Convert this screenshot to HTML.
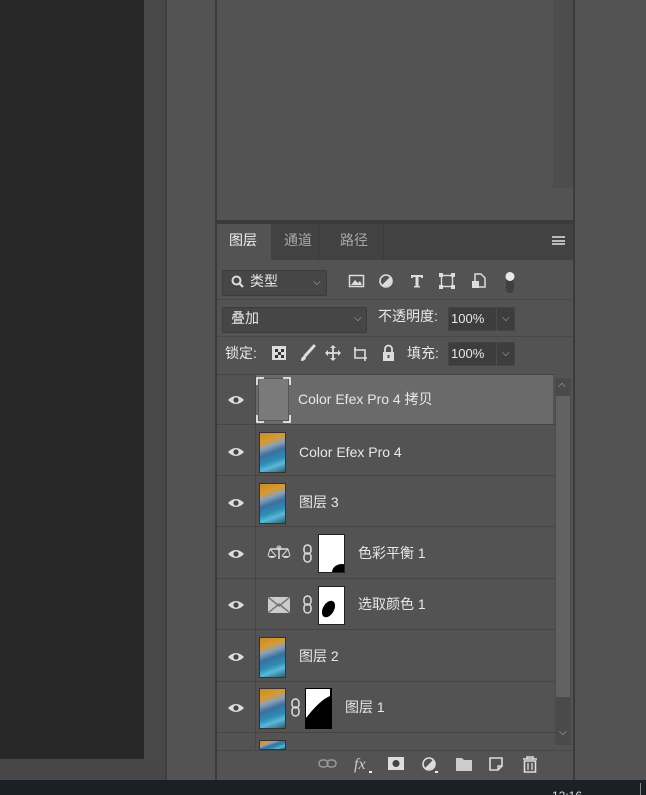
<!DOCTYPE html>
<html style="width:646px;height:795px;overflow:hidden"><head><meta charset="utf-8"><style>
*{margin:0;padding:0;box-sizing:border-box}
body{width:646px;height:795px;overflow:hidden;background:#535353;position:relative;font-family:"Liberation Sans","Noto Sans CJK SC",sans-serif;color:#e8e8e8}
.a{position:absolute}
.t{font-size:14px;white-space:nowrap;line-height:17px}
.eye{position:absolute;left:228px;width:16px;height:10px}
.row{position:absolute;left:217px;width:338px;border-bottom:1px solid #454545}
.th{position:absolute;left:259px;width:27px;height:41px;border:1px solid #333;background:linear-gradient(160deg,#c98a2a 0%,#d89a30 22%,#8aa0b8 35%,#3b6fa0 50%,#2d8fb5 68%,#5bb8d8 80%,#2a5b6c 100%)}
.chev{position:absolute;font-size:10px;color:#bbb}
</style></head><body>
<div class="a" style="left:0;top:0;width:144px;height:759px;background:#282828"></div>
<div class="a" style="left:144px;top:0;width:21px;height:759px;background:#484848"></div>
<div class="a" style="left:0;top:759px;width:165px;height:21px;background:#474747"></div>
<div class="a" style="left:165px;top:0;width:2px;height:780px;background:#3e3e3e"></div>
<div class="a" style="left:215px;top:0;width:2px;height:780px;background:#3a3a3a"></div>
<div class="a" style="left:573px;top:0;width:2px;height:780px;background:#3a3a3a"></div>
<div class="a" style="left:553px;top:0;width:20px;height:188px;background:#4d4d4d"></div>
<div class="a" style="left:217px;top:220px;width:356px;height:4px;background:#3a3a3a"></div>
<div class="a" style="left:0;top:780px;width:646px;height:15px;background:#1b2026;overflow:hidden"><div class="t" style="position:absolute;left:552px;top:8px;font-size:12px;color:#ddd">12:16</div><div style="position:absolute;left:640px;top:3px;width:1px;height:12px;background:#888"></div></div>
<!-- tab header -->
<div class="a" style="left:217px;top:224px;width:356px;height:36px;background:#424242"></div>
<div class="a" style="left:217px;top:224px;width:54px;height:37px;background:#535353"></div>
<div class="a" style="left:318px;top:224px;width:1px;height:36px;background:#3a3a3a"></div>
<div class="a" style="left:383px;top:224px;width:1px;height:36px;background:#3a3a3a"></div>
<div class="a t" style="left:229px;top:232px;color:#f0f0f0">图层</div>
<div class="a t" style="left:284px;top:232px;color:#a8a8a8">通道</div>
<div class="a t" style="left:340px;top:232px;color:#a8a8a8">路径</div>
<div class="a" style="left:552px;top:236px;width:13px;height:9px;border-top:2px solid #bbb;border-bottom:2px solid #bbb"><div style="margin-top:1.5px;height:2px;background:#bbb"></div></div>
<!-- filter row -->
<div class="a" style="left:222px;top:270px;width:105px;height:26px;background:#464646;border:1px solid #3c3c3c;border-radius:2px"></div>
<svg class="a" style="left:231px;top:275px" width="14" height="14"><circle cx="5.5" cy="5.5" r="4" stroke="#ddd" stroke-width="2" fill="none"/><line x1="8.5" y1="8.5" x2="12" y2="12" stroke="#ddd" stroke-width="2.2"/></svg>
<div class="a t" style="left:250px;top:273px">类型</div>
<div class="chev" style="left:313px;top:277px">⌵</div>
<svg class="a" style="left:348px;top:272px" width="170" height="22">
<rect x="1.5" y="3.5" width="14" height="11" fill="none" stroke="#ddd" stroke-width="1.5"/><path d="M3 13 L7 8 L10 11 L12 9 L14 13Z" fill="#ddd"/>
<circle cx="38" cy="9" r="6" fill="none" stroke="#ddd" stroke-width="1.6"/><path d="M42.2 4.8 A6 6 0 0 1 33.8 13.2Z" fill="#ddd"/>
<path d="M63 3 H75 V6 H73 V5 H70.5 V14 H72 V15.5 H66 V14 H67.5 V5 H65 V6 H63Z" fill="#ddd"/>
<rect x="93.5" y="3.5" width="11" height="11" fill="none" stroke="#ddd" stroke-width="1.4"/><rect x="91" y="1" width="4" height="4" fill="#ddd"/><rect x="103" y="1" width="4" height="4" fill="#ddd"/><rect x="91" y="13" width="4" height="4" fill="#ddd"/><rect x="103" y="13" width="4" height="4" fill="#ddd"/>
<path d="M127 2 H133 L137 6 V15 H127Z" fill="none" stroke="#ddd" stroke-width="1.5"/><rect x="124" y="9" width="7" height="7" fill="#ddd"/>
<rect x="158" y="6" width="8" height="15" rx="4" fill="#3f3f3f"/><circle cx="162" cy="4.5" r="4.5" fill="#e8e8e8"/>
</svg>
<div class="a" style="left:217px;top:299px;width:356px;height:1px;background:#484848"></div>
<!-- blend row -->
<div class="a" style="left:222px;top:307px;width:145px;height:26px;background:#464646;border:1px solid #3c3c3c;border-radius:2px"></div>
<div class="a t" style="left:231px;top:310px">叠加</div>
<div class="chev" style="left:354px;top:313px">⌵</div>
<div class="a t" style="left:378px;top:308px">不透明度:</div>
<div class="a" style="left:448px;top:307px;width:67px;height:24px;background:#3d3d3d;border:1px solid #454545"></div>
<div class="a" style="left:496px;top:307px;width:1px;height:24px;background:#4c4c4c"></div>
<div class="a t" style="left:451px;top:310px;font-size:13px">100%</div>
<div class="chev" style="left:502px;top:313px">⌵</div>
<div class="a" style="left:217px;top:336px;width:356px;height:1px;background:#484848"></div>
<!-- lock row -->
<div class="a t" style="left:225px;top:345px">锁定:</div>
<svg class="a" style="left:270px;top:344px" width="130" height="18">
<rect x="2" y="2" width="14" height="14" fill="#ddd"/><rect x="5" y="5" width="3" height="3" fill="#333"/><rect x="11" y="5" width="3" height="3" fill="#333"/><rect x="8" y="8" width="3" height="3" fill="#333"/><rect x="5" y="11" width="3" height="3" fill="#333"/><rect x="11" y="11" width="3" height="3" fill="#333"/>
<path d="M44 2 L35 12" stroke="#ddd" stroke-width="3" stroke-linecap="round"/><path d="M31 17 Q31 12 35 12 L36 14 Q35 17 31 17Z" fill="#ddd"/>
<path d="M63 2 V16 M56 9 H70" stroke="#ddd" stroke-width="1.8"/><path d="M63 1 L60 4 H66Z M63 17 L60 14 H66Z M55 9 L58 6 V12Z M71 9 L68 6 V12Z" fill="#ddd"/>
<path d="M85 3 V14 H97 M84 6 H95 V17" stroke="#ddd" stroke-width="1.6" fill="none"/>
<rect x="113" y="8" width="11" height="9" fill="#ddd"/><path d="M115 8 V5 A3.5 3.5 0 0 1 122 5 V8" stroke="#ddd" stroke-width="1.8" fill="none"/><rect x="117.5" y="11" width="2" height="3" fill="#555"/>
</svg>
<div class="a t" style="left:407px;top:345px">填充:</div>
<div class="a" style="left:448px;top:342px;width:67px;height:24px;background:#3d3d3d;border:1px solid #454545"></div>
<div class="a" style="left:496px;top:342px;width:1px;height:24px;background:#4c4c4c"></div>
<div class="a t" style="left:451px;top:345px;font-size:13px">100%</div>
<div class="chev" style="left:502px;top:348px">⌵</div>
<!-- layers -->
<div class="a" style="left:217px;top:374px;width:338px;height:1px;background:#454545"></div>
<div class="a" style="left:255px;top:375px;width:298px;height:49px;background:#6a6a6a"></div>
<div class="a" style="left:255px;top:375px;width:1px;height:375px;background:#474747"></div>
<div class="row" style="top:375px;height:50px"></div>
<div class="row" style="top:425px;height:51px"></div>
<div class="row" style="top:476px;height:51px"></div>
<div class="row" style="top:527px;height:52px"></div>
<div class="row" style="top:579px;height:51px"></div>
<div class="row" style="top:630px;height:52px"></div>
<div class="row" style="top:682px;height:51px"></div>
<svg width="0" height="0" style="position:absolute"><defs><g id="e"><path d="M0 5 Q8 -3 16 5 Q8 13 0 5Z" fill="#ddd"/><circle cx="8" cy="5" r="2.6" fill="#444"/></g></defs></svg>
<svg class="eye" style="top:395px"><use href="#e"/></svg>
<svg class="eye" style="top:447px"><use href="#e"/></svg>
<svg class="eye" style="top:498px"><use href="#e"/></svg>
<svg class="eye" style="top:549px"><use href="#e"/></svg>
<svg class="eye" style="top:600px"><use href="#e"/></svg>
<svg class="eye" style="top:652px"><use href="#e"/></svg>
<svg class="eye" style="top:703px"><use href="#e"/></svg>
<div class="a" style="left:258px;top:378px;width:31px;height:43px;background:#7a7a7a;border:1px solid #555"></div>
<svg class="a" style="left:256px;top:377px" width="35" height="46"><path d="M1 8 V1 H8 M27 1 H34 V8 M1 38 V45 H8 M27 45 H34 V38" stroke="#fff" stroke-width="1.5" fill="none"/></svg>
<div class="a t" style="left:298px;top:391px">Color Efex Pro 4 拷贝</div>
<div class="th" style="top:432px"></div>
<div class="a t" style="left:299px;top:444px">Color Efex Pro 4</div>
<div class="th" style="top:483px"></div>
<div class="a t" style="left:299px;top:494px">图层 3</div>
<svg class="a" style="left:267px;top:545px" width="24" height="18"><path d="M12 2 V14 M3 4 H21" stroke="#ddd" stroke-width="1.5"/><circle cx="12" cy="3" r="2" fill="none" stroke="#ddd"/><path d="M1 11 A5 5 0 0 0 9 11Z M15 11 A5 5 0 0 0 23 11Z" fill="#ddd"/><path d="M3 4 L1 11 M3 4 L9 11 M21 4 L15 11 M21 4 L23 11" stroke="#ddd"/></svg>
<svg class="a" style="left:302px;top:544px" width="12" height="20"><rect x="2" y="1" width="7" height="9" rx="3.5" fill="none" stroke="#ddd" stroke-width="1.5"/><rect x="2" y="9" width="7" height="9" rx="3.5" fill="none" stroke="#ddd" stroke-width="1.5"/></svg>
<div class="a" style="left:318px;top:534px;width:27px;height:39px;background:#fff;border:1px solid #222;overflow:hidden"><div style="position:absolute;right:-8px;bottom:-8px;width:20px;height:16px;border-radius:50%;background:#000"></div></div>
<div class="a t" style="left:358px;top:545px">色彩平衡 1</div>
<svg class="a" style="left:268px;top:597px" width="22" height="16"><rect width="22" height="16" fill="#ccc"/><path d="M0 0 L11 9 L22 0 M0 16 L11 7 L22 16" stroke="#777" stroke-width="1.5" fill="none"/></svg>
<svg class="a" style="left:302px;top:595px" width="12" height="20"><rect x="2" y="1" width="7" height="9" rx="3.5" fill="none" stroke="#ddd" stroke-width="1.5"/><rect x="2" y="9" width="7" height="9" rx="3.5" fill="none" stroke="#ddd" stroke-width="1.5"/></svg>
<div class="a" style="left:318px;top:586px;width:27px;height:39px;background:#fff;border:1px solid #222"><div style="position:absolute;left:4px;top:13px;width:11px;height:18px;border-radius:50%;background:#000;transform:rotate(30deg)"></div></div>
<div class="a t" style="left:358px;top:596px">选取颜色 1</div>
<div class="th" style="top:637px"></div>
<div class="a t" style="left:299px;top:648px">图层 2</div>
<div class="th" style="top:688px"></div>
<svg class="a" style="left:290px;top:698px" width="12" height="20"><rect x="2" y="1" width="7" height="9" rx="3.5" fill="none" stroke="#ddd" stroke-width="1.5"/><rect x="2" y="9" width="7" height="9" rx="3.5" fill="none" stroke="#ddd" stroke-width="1.5"/></svg>
<svg class="a" style="left:305px;top:688px" width="27" height="41"><rect width="27" height="41" fill="#000"/><path d="M1 1 H25 L25 8 Q15 12 1 30Z" fill="#fff"/></svg>
<div class="a t" style="left:345px;top:699px">图层 1</div>
<div class="th" style="top:740px;height:10px"></div>
<div class="a" style="left:555px;top:378px;width:16px;height:367px;background:#4a4a4a"></div>
<div class="a" style="left:556px;top:396px;width:14px;height:301px;background:#626262"></div>
<div class="chev" style="left:558px;top:380px;transform:rotate(180deg)">⌵</div>
<div class="chev" style="left:559px;top:727px">⌵</div>
<div class="a" style="left:217px;top:750px;width:356px;height:1px;background:#474747"></div>
<svg class="a" style="left:318px;top:755px" width="230" height="20">
<rect x="1" y="5" width="9" height="7" rx="3.5" fill="none" stroke="#999" stroke-width="1.5"/><rect x="9" y="5" width="9" height="7" rx="3.5" fill="none" stroke="#999" stroke-width="1.5"/>
<text x="36" y="14" font-family="Liberation Serif,serif" font-style="italic" font-size="16" fill="#ccc">fx</text><rect x="51" y="16" width="3" height="2" fill="#eee"/>
<rect x="70" y="2" width="16" height="13" fill="#ddd"/><circle cx="78" cy="8.5" r="3.5" fill="#444"/>
<circle cx="111" cy="9" r="6" fill="none" stroke="#ddd" stroke-width="1.6"/><path d="M115.2 4.8 A6 6 0 0 1 106.8 13.2Z" fill="#ddd"/><rect x="117" y="16" width="3" height="2" fill="#eee"/>
<path d="M138 3 H144 L146 5 H154 V16 H138Z" fill="#ccc"/>
<path d="M172 3 H184 V11 L180 15 H172Z" fill="none" stroke="#ddd" stroke-width="1.6"/><path d="M180 15 V11 H184" fill="none" stroke="#ddd" stroke-width="1.4"/>
<path d="M205 4 H219 M209 4 V2 H215 V4" stroke="#ddd" stroke-width="1.6" fill="none"/><path d="M206.5 6 H217.5 V17 H206.5Z" fill="none" stroke="#ddd" stroke-width="1.6"/><path d="M210 8 V15 M214 8 V15" stroke="#ddd" stroke-width="1.3"/>
</svg>
</body></html>
